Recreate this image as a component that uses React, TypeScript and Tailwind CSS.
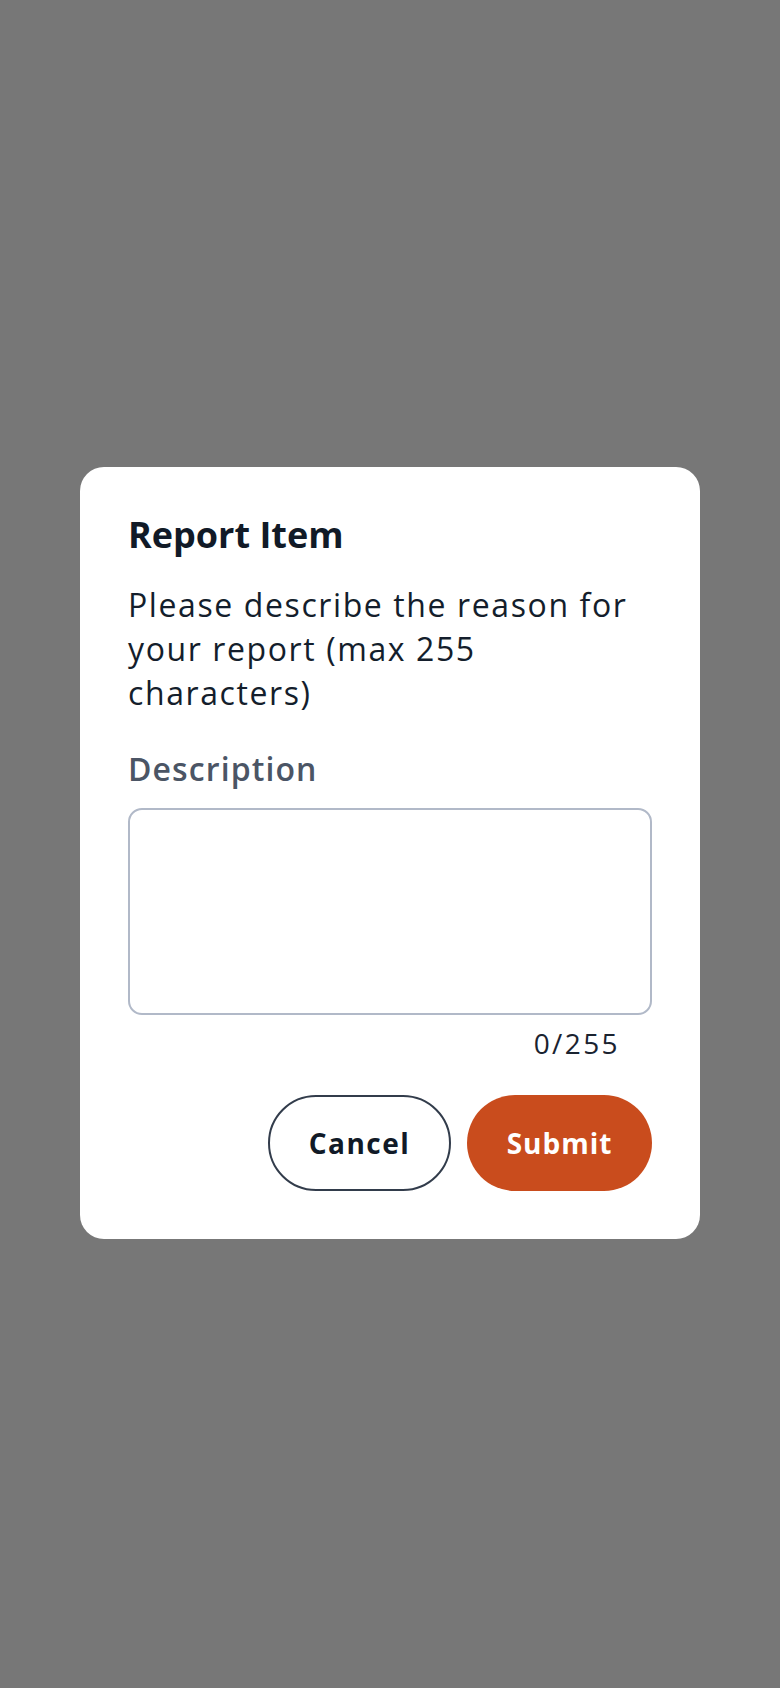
import React from "react";

export default function App() {
  return (
    <div
      className="w-full min-h-[1688px] h-[1688px] bg-[#777777] flex items-center justify-center pt-[18px]"
      style={{ fontFamily: '"Open Sans", "Liberation Sans", sans-serif' }}
    >
      <div className="w-[620px] bg-white rounded-[24px] p-12 flex flex-col">
        <h2 className="text-[36px] leading-[40px] font-bold text-[#111a27]">Report Item</h2>
        <p className="mt-7 text-[32px] leading-[44px] tracking-[1.6px] text-[#141e2c]">
          <span className="block">Please describe the reason for</span>
          <span className="block">your report (max 255</span>
          <span className="block">characters)</span>
        </p>
        <label className="mt-[30px] text-[32px] leading-[48px] font-semibold tracking-[1.1px] text-[#4b5565]">
          Description
        </label>
        <textarea
          className="mt-[15px] h-[207px] w-full resize-none rounded-[14px] border-2 border-[#b1b9c8] bg-white outline-none"
          aria-label="Description"
        />
        <div className="mt-2 pr-[32px] text-right text-[28px] leading-[40px] tracking-[2.4px] text-[#1a2330]">0/255</div>
        <div className="mt-8 flex justify-end gap-4">
          <button className="h-[96px] w-[183px] rounded-full border-2 border-[#323c4b] bg-white text-[28px] font-bold tracking-[1.5px] text-[#111a27]">
            Cancel
          </button>
          <button className="h-[96px] w-[185px] rounded-full bg-[#c94c1d] text-[28px] font-bold tracking-[1px] text-white">
            Submit
          </button>
        </div>
      </div>
    </div>
  );
}
